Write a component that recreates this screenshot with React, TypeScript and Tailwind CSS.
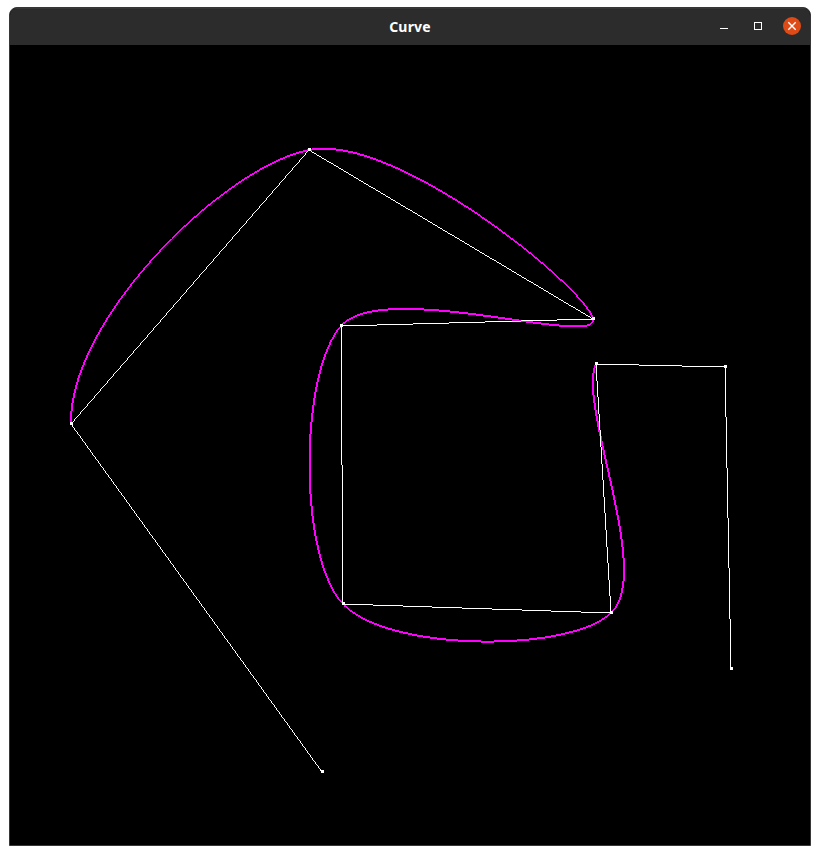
import React from "react";

type Point = [number, number];

// Control points in canvas coordinates (800 x 800).
const points: Point[] = [
  [312, 726],
  [61, 378],
  [299, 104],
  [583, 273],
  [331, 280],
  [333, 558],
  [601, 567],
  [586, 318],
  [715, 321],
  [721, 623],
];

const pixel = (x: number, y: number, w: number, h: number) => `M${x} ${y}h${w}v${h}h${-w}z`;

// Aliased line: thickness is measured along the minor axis.
function rasterLine(a: Point, b: Point, width: number, out: Set<string>) {
  const dx = b[0] - a[0];
  const dy = b[1] - a[1];
  const offset = Math.floor(width / 2);
  if (Math.abs(dx) >= Math.abs(dy)) {
    const [p, q] = dx >= 0 ? [a, b] : [b, a];
    for (let x = Math.ceil(p[0] - 0.5); x + 0.5 <= q[0]; x++) {
      const y = p[1] + ((x + 0.5 - p[0]) * dy) / dx;
      const top = width === 1 ? Math.floor(y) : Math.round(y) - offset;
      out.add(pixel(x, top, 1, width));
    }
  } else {
    const [p, q] = dy >= 0 ? [a, b] : [b, a];
    for (let y = Math.ceil(p[1] - 0.5); y + 0.5 <= q[1]; y++) {
      const x = p[0] + ((y + 0.5 - p[1]) * dx) / dy;
      const left = width === 1 ? Math.floor(x) : Math.round(x) - offset;
      out.add(pixel(left, y, width, 1));
    }
  }
}

function spline(p0: number, p1: number, p2: number, p3: number, t: number) {
  return (
    0.5 *
    (2 * p1 +
      (p2 - p0) * t +
      (2 * p0 - 5 * p1 + 4 * p2 - p3) * t * t +
      (3 * p1 - p0 - 3 * p2 + p3) * t * t * t)
  );
}

const corner = ([x, y]: Point): Point => [x, y + 1];

function buildPolygon() {
  const out = new Set<string>();
  for (let i = 0; i < points.length - 1; i++) {
    rasterLine(corner(points[i]), corner(points[i + 1]), 1, out);
  }
  return [...out].join("");
}

function buildCurve() {
  const out = new Set<string>();
  const steps = 100;
  for (let i = 1; i < points.length - 3; i++) {
    const [a, b, c, d] = points.slice(i - 1, i + 3).map(corner);
    let previous = b;
    for (let s = 1; s <= steps; s++) {
      const t = s / steps;
      const next: Point = [
        spline(a[0], b[0], c[0], d[0], t),
        spline(a[1], b[1], c[1], d[1], t),
      ];
      rasterLine(previous, next, 2, out);
      previous = next;
    }
  }
  return [...out].join("");
}

const polygonPath = buildPolygon();
const curvePath = buildCurve();
const handlesPath = points.map(([x, y]) => pixel(x - 1, y - 1, 3, 3)).join("");

function TitleBar() {
  return (
    <header className="grid h-[37px] grid-cols-[1fr_auto_1fr] items-center bg-[#2c2c2c] shadow-[inset_0_1px_0_#373737]">
      <span />
      <h1 className="font-['Noto_Sans',sans-serif] text-[14px] leading-5 font-bold tracking-[0.2px] text-white">
        Curve
      </h1>
      <div className="flex items-center justify-end gap-4 pr-[9px] pb-px">
        <button aria-label="Minimize" className="size-[18px]">
          <svg viewBox="0 0 18 18" className="size-[18px]" shapeRendering="crispEdges">
            <path d="M5 11h8v1H5z" fill="#fff" />
          </svg>
        </button>
        <button aria-label="Maximize" className="size-[18px]">
          <svg viewBox="0 0 18 18" className="size-[18px]">
            <rect x="5.5" y="5.5" width="7" height="7" fill="none" stroke="#fff" />
          </svg>
        </button>
        <button aria-label="Close" className="size-[18px] rounded-full bg-[#de4b17]">
          <svg viewBox="0 0 18 18" className="size-[18px]">
            <path d="M5.3 5.3l7.4 7.4M12.7 5.3l-7.4 7.4" stroke="#fff" strokeWidth="1.4" />
          </svg>
        </button>
      </div>
    </header>
  );
}

export default function App() {
  return (
    <div className="h-[855px] w-[820px] bg-white pt-[7px] pl-[9px]">
      <main className="w-[802px] overflow-hidden rounded-t-lg border border-[#373737] bg-black">
        <TitleBar />
        <svg
          viewBox="0 0 800 800"
          className="block h-[800px] w-[800px] bg-black"
          shapeRendering="crispEdges"
        >
          <path d={curvePath} fill="#ff00ff" />
          <path d={polygonPath} fill="#fff" />
          <path d={handlesPath} fill="#fff" />
        </svg>
      </main>
    </div>
  );
}
